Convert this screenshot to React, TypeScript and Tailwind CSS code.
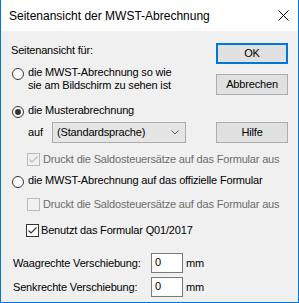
function Radio({ checked }: { checked?: boolean }) {
  return (
    <span className="mt-[2px] flex h-[12px] w-[12px] shrink-0 items-center justify-center rounded-full border border-[#333333] bg-white">
      {checked && <span className="h-[6px] w-[6px] rounded-full bg-[#333333]" />}
    </span>
  );
}

function Check({ checked, disabled }: { checked?: boolean; disabled?: boolean }) {
  return (
    <span
      className={
        "flex h-[13px] w-[13px] shrink-0 items-center justify-center border " +
        (disabled ? "border-[#bcbcbc] bg-[#f0f0f0]" : "border-[#333333] bg-white")
      }
    >
      {checked && (
        <svg width="11" height="11" viewBox="0 0 11 11" fill="none">
          <path
            d="M1.5 5.5 L4 8 L9.5 2.5"
            stroke={disabled ? "#bcbcbc" : "#333333"}
            strokeWidth="1.2"
          />
        </svg>
      )}
    </span>
  );
}

function Button({ label, focused }: { label: string; focused?: boolean }) {
  return (
    <button
      className={
        "flex h-[21px] w-[72px] shrink-0 items-center justify-center bg-[#e1e1e1] text-black " +
        (focused ? "border-2 border-[#0078d7]" : "border border-[#adadad]")
      }
    >
      {label}
    </button>
  );
}

function OffsetRow({ label }: { label: string }) {
  return (
    <div className="flex h-[20px] items-center pl-[2px]">
      <span className="w-[138px]">{label}</span>
      <div className="h-[20px] w-[32px] border border-[#7a7a7a] bg-white pl-[3px] pt-[2px]">0</div>
      <span className="ml-[3px]">mm</span>
    </div>
  );
}

export default function App() {
  return (
    <div className="flex h-[303px] w-[299px] flex-col border-x border-b border-[#0078d7] bg-[#f0f0f0] font-['Liberation_Sans',Arial,sans-serif] text-[11px] leading-[13px] tracking-[-0.17px] text-black">
      <div className="flex h-[31px] shrink-0 items-center justify-between bg-white pl-[8px] pr-[9px] tracking-normal">
        <span className="text-[12px] leading-[16px]">Seitenansicht der MWST-Abrechnung</span>
        <svg width="11" height="11" viewBox="0 0 11 11">
          <path d="M0.5 0.5 L10.5 10.5 M10.5 0.5 L0.5 10.5" stroke="#000" strokeWidth="1" />
        </svg>
      </div>

      <div className="flex flex-col pl-[10px] pr-[10px]">
        <div className="mt-[12px] flex items-start justify-between">
          <span className="mt-[1px]">Seitenansicht für:</span>
          <Button label="OK" focused />
        </div>

        <div className="mt-[2px] flex items-start justify-between">
          <div className="flex items-start gap-[4px] pl-[1px]">
            <Radio />
            <span>
              die MWST-Abrechnung so wie
              <br />
              sie am Bildschirm zu sehen ist
            </span>
          </div>
          <div className="mt-[8px]">
            <Button label="Abbrechen" />
          </div>
        </div>

        <div className="mt-[9px] flex items-start gap-[4px] pl-[1px]">
          <Radio checked />
          <span>die Musterabrechnung</span>
        </div>

        <div className="mt-[4px] flex h-[21px] items-center justify-between">
          <div className="flex items-center pl-[17px]">
            <span className="w-[24px]">auf</span>
            <div className="flex h-[21px] w-[134px] items-center justify-between border border-[#acacac] bg-[#e5e5e5] pl-[4px] pr-[6px]">
              <span>(Standardsprache)</span>
              <svg width="8" height="5" viewBox="0 0 8 5" fill="none">
                <path d="M0.5 0.5 L4 4 L7.5 0.5" stroke="#606060" strokeWidth="1" />
              </svg>
            </div>
          </div>
          <Button label="Hilfe" />
        </div>

        <div className="mt-[10px] flex items-center gap-[3px] pl-[16px] text-[#6d6d6d]">
          <Check checked disabled />
          <span>Druckt die Saldosteuersätze auf das Formular aus</span>
        </div>

        <div className="mt-[8px] flex items-start gap-[4px] pl-[1px]">
          <Radio />
          <span>die MWST-Abrechnung auf das offizielle Formular</span>
        </div>

        <div className="mt-[10px] flex items-center gap-[3px] pl-[16px] text-[#6d6d6d]">
          <Check disabled />
          <span>Druckt die Saldosteuersätze auf das Formular aus</span>
        </div>

        <div className="mt-[13px] flex items-center gap-[2px] pl-[15px]">
          <Check checked />
          <span>Benutzt das Formular Q01/2017</span>
        </div>

        <div className="mt-[16px]">
          <OffsetRow label="Waagrechte Verschiebung:" />
        </div>
        <div className="mt-[4px]">
          <OffsetRow label="Senkrechte Verschiebung:" />
        </div>
      </div>
    </div>
  );
}
